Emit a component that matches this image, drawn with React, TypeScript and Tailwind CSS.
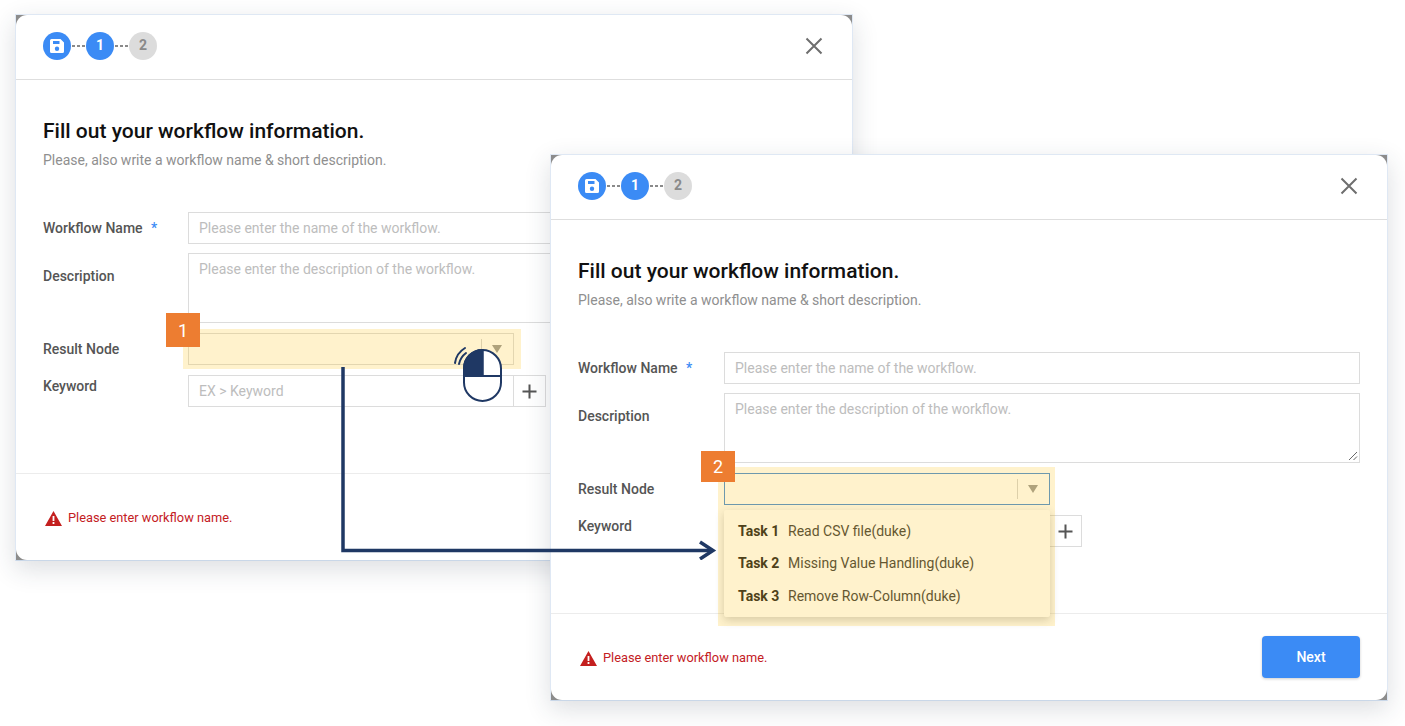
import React from "react";

function StepDots() {
  return (
    <div className="w-[15px] flex justify-center gap-[2px]">
      <div className="w-[3px] h-[2px] bg-[#8a8a8a]" />
      <div className="w-[3px] h-[2px] bg-[#8a8a8a]" />
      <div className="w-[3px] h-[2px] bg-[#8a8a8a]" />
    </div>
  );
}

function Dialog({ second }: { second?: boolean }) {
  const labelW = second ? "w-[146px]" : "w-[145px]";
  return (
    <div className="w-[838px] h-[547px] border border-[#dfe8f4] border-b-[#c9d7e8] bg-[#8c8c8c] shadow-[0_8px_24px_rgba(40,50,70,0.16)]">
      <div className="w-full h-full rounded-[11px] bg-white flex flex-col">
        <div className="h-[65px] shrink-0 flex items-center justify-between pl-[27px] pr-[28px] pb-[3px] border-b border-[#dedede]">
          <div className="flex items-center">
            <div className="w-[28px] h-[28px] rounded-full bg-[#3b8bf5] flex items-center justify-center">
              <svg width="16" height="16" viewBox="0 0 16 16">
                <path fillRule="evenodd" fill="#fff" d="M2.5 1H11.5L15 4.5V13.5A1.5 1.5 0 0 1 13.5 15H2.5A1.5 1.5 0 0 1 1 13.5V2.5A1.5 1.5 0 0 1 2.5 1ZM4 3V6H10.5V3ZM8 8.5A2.2 2.2 0 1 0 8 12.9A2.2 2.2 0 1 0 8 8.5Z" />
              </svg>
            </div>
            <StepDots />
            <div className="w-[28px] h-[28px] rounded-full bg-[#3b8bf5] flex items-center justify-center text-white text-[14px] font-bold">1</div>
            <StepDots />
            <div className="w-[28px] h-[28px] rounded-full bg-[#dcdcdc] flex items-center justify-center text-[#8a8a8a] text-[14px] font-bold">2</div>
          </div>
          <svg width="20" height="20" viewBox="0 0 20 20" stroke="#6e6e6e" strokeWidth="2" fill="none">
            <path d="M2.5 2.5L17.5 17.5M17.5 2.5L2.5 17.5" />
          </svg>
        </div>

        <div className="flex-1 pl-[27px] pr-[26px] pt-[38px] border-b border-[#ececec]">
          <h2 className="text-[21px] leading-[26px] font-medium text-[#111]">Fill out your workflow information.</h2>
          <p className="mt-[7px] text-[14px] leading-[18px] text-[#8f8f8f]">Please, also write a workflow name &amp; short description.</p>

          <div className="mt-[43px] flex items-center h-[32px]">
            <div className={`${labelW} shrink-0 text-[14px] font-medium text-[#555]`}>
              Workflow Name <span className="text-[#3b8bf5] ml-[5px]">*</span>
            </div>
            <div className="w-[636px] h-[32px] border border-[#dcdcdc] px-[10px] flex items-center text-[14px] text-[#bdbdbd]">
              Please enter the name of the workflow.
            </div>
          </div>

          <div className="mt-[9px] flex">
            <div className={`${labelW} shrink-0 pt-[14px] text-[14px] leading-[18px] font-medium text-[#555]`}>Description</div>
            <div className="relative w-[636px] h-[70px] border border-[#dcdcdc] px-[10px] pt-[6px] text-[14px] leading-[18px] text-[#bdbdbd]">
              Please enter the description of the workflow.
              <svg className="absolute right-[1px] bottom-[1px]" width="10" height="10" viewBox="0 0 10 10" stroke="#666" fill="none">
                <path d="M1 9L9 1M5.5 9L9 5.5" />
              </svg>
            </div>
          </div>

          <div className="mt-[10px] flex items-center h-[32px]">
            <div className={`${labelW} shrink-0 text-[14px] font-medium text-[#555]`}>Result Node</div>
            <div className="relative">
              <div className={`w-[326px] h-[32px] border flex items-center justify-end ${second ? "border-[#4a90d9]" : "border-[#dcdcdc]"}`}>
                <div className="w-px h-[20px] bg-[#d5d5d5]" />
                <div className="w-[31px] pr-[1px] flex justify-center">
                  <svg width="12" height="8" viewBox="0 0 12 8"><path d="M1 0H11L6 8Z" fill="#9b9b9b" /></svg>
                </div>
              </div>
              {second && (
                <div className="absolute left-0 top-[37px] z-10 w-[326px] h-[107px] bg-white rounded-[2px] shadow-[0_3px_10px_rgba(0,0,0,0.2)] pl-[14px] flex flex-col justify-center">
                  {[
                    ["Task 1", "Read CSV file(duke)"],
                    ["Task 2", "Missing Value Handling(duke)"],
                    ["Task 3", "Remove Row-Column(duke)"],
                  ].map(([a, b]) => (
                    <div key={a} className="h-[32.5px] flex items-center text-[14px] text-[#3d3d3d]">
                      <span className="w-[50px] font-bold text-[#222]">{a}</span>
                      {b}
                    </div>
                  ))}
                </div>
              )}
            </div>
          </div>

          <div className="mt-[10px] flex">
            <div className={`${labelW} shrink-0 pt-[2px] text-[14px] leading-[18px] font-medium text-[#555]`}>Keyword</div>
            <div className="w-[326px] h-[32px] border border-[#dcdcdc] px-[10px] flex items-center text-[14px] text-[#bdbdbd]">
              {second ? "" : "EX > Keyword"}
            </div>
            <div className="w-[33px] h-[32px] -ml-px border border-[#dcdcdc] flex items-center justify-center">
              <svg width="15" height="15" viewBox="0 0 15 15" stroke="#555" strokeWidth="2"><path d="M7.5 0.5V14.5M0.5 7.5H14.5" /></svg>
            </div>
          </div>
        </div>

        <div className="h-[86px] shrink-0 pl-[29px] pr-[27px] flex items-center justify-between">
          <div className="flex items-center gap-[6px] mt-[3px]">
            <svg width="17" height="15" viewBox="0 0 17 15">
              <path fillRule="evenodd" fill="#c4201f" d="M8.5 0L17 15H0ZM7.6 5V10H9.4V5ZM7.6 11V13H9.4V11Z" />
            </svg>
            <span className="text-[12.8px] text-[#c4201f] relative -top-[1px]">Please enter workflow name.</span>
          </div>
          {second && (
            <div className="w-[98px] h-[42px] rounded-[4px] bg-[#3b8bf5] text-white text-[14px] font-medium flex items-center justify-center shadow-[0_1px_3px_rgba(0,0,0,0.2)]">Next</div>
          )}
        </div>
      </div>
    </div>
  );
}

function Badge({ n, className }: { n: string; className: string }) {
  return (
    <div className={`absolute z-40 bg-[#ed7d31] text-white text-[18px] flex items-center justify-center ${className}`}>{n}</div>
  );
}

export default function App() {
  return (
    <div className="relative w-[1405px] h-[726px] overflow-hidden bg-white font-['Roboto',sans-serif]">
      <div className="absolute left-[15px] top-[14px]"><Dialog /></div>
      <div className="absolute left-[550px] top-[154px] z-10"><Dialog second /></div>

      <div className="absolute z-20 left-[183px] top-[329px] w-[338px] h-[40px] bg-[#ffc000]/20" />
      <div className="absolute z-20 left-[718px] top-[467px] w-[337px] h-[159px] bg-[#ffc000]/20" />
      <Badge n="1" className="left-[166px] top-[313px] w-[34px] h-[34px]" />
      <Badge n="2" className="left-[701px] top-[451px] w-[34px] h-[31px]" />

      <svg className="absolute left-[335px] top-[360px] z-30" width="390" height="200" viewBox="0 0 390 200" fill="none" stroke="#1f3864">
        <path d="M8 7V190.500H376" strokeWidth="3.500" />
        <path d="M365 182L378 190.500L365 199" strokeWidth="3.500" />
      </svg>

      <svg className="absolute left-[452px] top-[345px] z-30" width="52" height="58" viewBox="0 0 52 58" fill="none" stroke="#1f3864" strokeWidth="2">
        <rect x="12" y="5" width="37" height="51" rx="18.500" fill="#fff" />
        <path d="M30.500 5C20 5 12 13 12 23.500V31H30.500Z" fill="#1f3864" />
        <path d="M12 31H49M30.500 5V31" />
        <path d="M3 18C4 11 8 6 13 3M7 19C8 14 10 11 14 8" strokeLinecap="round" />
      </svg>
    </div>
  );
}
